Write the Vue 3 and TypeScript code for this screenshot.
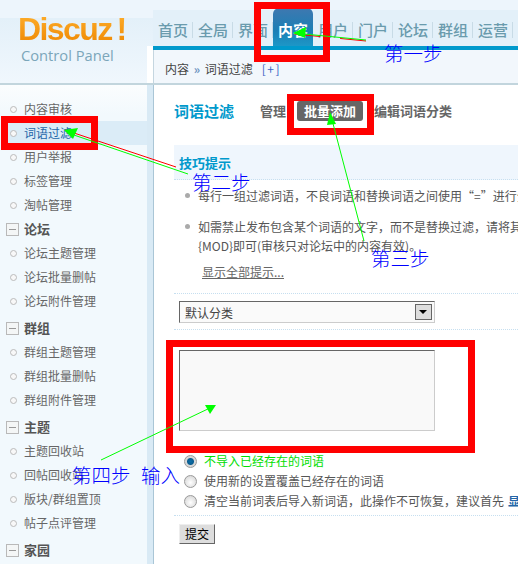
<script setup lang="ts">
const navItems = ['首页', '全局', '界面', '内容', '用户', '门户', '论坛', '群组', '运营']
const groups = [
  { title: '', items: ['内容审核', '词语过滤', '用户举报', '标签管理', '淘帖管理'] },
  { title: '论坛', items: ['论坛主题管理', '论坛批量删帖', '论坛附件管理'] },
  { title: '群组', items: ['群组主题管理', '群组批量删帖', '群组附件管理'] },
  { title: '主题', items: ['主题回收站', '回帖回收站', '版块/群组置顶', '帖子点评管理'] },
  { title: '家园', items: [] as string[] },
]
const radios = [
  { text: '不导入已经存在的词语', on: true },
  { text: '使用新的设置覆盖已经存在的词语', on: false },
  { text: '清空当前词表后导入新词语，此操作不可恢复，建议首先', on: false, link: '显示' },
]
</script>

<template>
  <div class="page">
    <header class="top">
      <div class="brand">
        <div class="logo">Discuz<span class="bang">!</span></div>
        <div class="panel">Control Panel</div>
      </div>
      <div class="gutter"></div>
      <div class="top-right">
        <nav class="nav">
          <a v-for="n in navItems" :key="n" class="nav-item" :class="{ active: n === '内容' }">{{ n }}</a>
        </nav>
        <div class="crumb">内容 <span class="sep">»</span> 词语过滤<span class="plus">[+]</span></div>
      </div>
    </header>

    <div class="body">
      <aside class="side">
        <section v-for="g in groups" :key="g.title" class="group">
          <div v-if="g.title" class="group-title"><span class="minus"></span>{{ g.title }}</div>
          <div v-for="i in g.items" :key="i" class="side-item" :class="{ current: i === '词语过滤' }">
            <span class="dot"></span>{{ i }}
          </div>
        </section>
      </aside>
      <div class="splitter"></div>
      <main class="main">
        <div class="tabs">
          <h3 class="title">词语过滤</h3>
          <span class="tab first">管理</span>
          <span class="tab on">批量添加</span>
          <span class="tab">编辑词语分类</span>
        </div>
        <div class="tip-head">技巧提示</div>
        <ul class="tips">
          <li>每行一组过滤词语，不良词语和替换词语之间使用“=”进行分隔</li>
          <li>如需禁止发布包含某个词语的文字，而不是替换过滤，请将其对应<br />{MOD}即可(审核只对论坛中的内容有效)。</li>
        </ul>
        <a class="more">显示全部提示...</a>
        <div class="row-select">
          <div class="select">默认分类<span class="arrow"></span></div>
        </div>
        <div class="row-area">
          <textarea class="area"></textarea>
        </div>
        <div class="radios">
          <div v-for="r in radios" :key="r.text" class="radio" :class="{ green: r.on }">
            <span class="bullet" :class="{ checked: r.on }"></span>{{ r.text }}
            <a v-if="r.link" class="radio-link">{{ r.link }}</a>
          </div>
        </div>
        <div class="submit-row"><button class="submit" type="button">提交</button></div>
      </main>
    </div>

    <div class="mark mark-nav"></div>
    <div class="mark mark-side"></div>
    <div class="mark mark-tab"></div>
    <div class="mark mark-area"></div>

    <svg class="arrows" width="518" height="564" viewBox="0 0 518 564">
      <g fill="none" stroke-width="1">
        <path d="M366 40 L294 33" stroke="#f00" transform="translate(0 1)" stroke-dasharray="26 20" />
        <path d="M366 40 L294 33" stroke="#0f0" />
        <path d="M176 167 L65 130" stroke="#f00" />
        <path d="M188 174 L68 133" stroke="#0f0" />
        <path d="M364 241 L331 116" stroke="#0f0" />
        <path d="M101 460 L212 407" stroke="#0f0" />
      </g>
      <path d="M293 33 L306 27 L305 38 Z" fill="#0f0" />
      <path d="M64 130 L78 128 L73 139 Z" fill="#0f0" />
      <path d="M330 112 L336 124 L327 125 Z" fill="#0f0" />
      <path d="M216 405 L205 405 L210 414 Z" fill="#0f0" />
    </svg>
    <span class="step s1">第一步</span>
    <span class="step s2">第二步</span>
    <span class="step s3">第三步</span>
    <span class="step s4">第四步</span>
    <span class="step s5">输入</span>
  </div>
</template>

<style>
html, body { margin: 0; overflow: hidden; background: #fff; }
</style>

<style scoped>
.page {
  position: relative;
  width: 518px;
  height: 564px;
  overflow: hidden;
  font: 12px/24px "Noto Sans CJK SC", "Liberation Sans", sans-serif;
  color: #555;
  background: #fff;
}
.top {
  display: flex;
  height: 83px;
  background: linear-gradient(#edf5fc 0, #edf5fc 18px, #e3f0f9 18px, #f0f7fd 83px);
}
.brand { width: 147px; padding: 12px 0 0 18px; box-sizing: border-box; }
.logo {
  font: bold 32px/34px "Liberation Sans", sans-serif;
  letter-spacing: -1.6px;
  color: #fb9a14;
  background: linear-gradient(#ffb02e, #ee8600);
  -webkit-background-clip: text;
  background-clip: text;
  -webkit-text-fill-color: transparent;
  width: max-content;
}
.bang { margin-left: 5px; }
.panel {
  font: 14.7px/18px "Open Sans", "Liberation Sans", sans-serif;
  color: #7ba6ba;
  margin: 0 0 0 3px;
  white-space: nowrap;
}
.gutter { width: 6px; flex: none; background: linear-gradient(transparent 46px, #fff 46px); }
.top-right {
  flex: 1;
  display: flex;
  flex-direction: column;
  background: #fff;
  min-width: 0;
}
.nav {
  display: flex;
  height: 50px;
  box-sizing: border-box;
  border-bottom: 4px solid #0099cc;
  padding-top: 8px;
  background: linear-gradient(#edf5fc 0, #edf5fc 10px, #e3f0f9 10px);
}
.nav-item {
  position: relative;
  width: 40px;
  flex: none;
  text-align: center;
  font-size: 15px;
  font-weight: 500;
  line-height: 44px;
  color: #6a9bad;
}
.nav-item::after {
  content: "";
  position: absolute;
  right: 0;
  top: 14px;
  height: 16px;
  border-right: 1px solid #c8dbe6;
}
.nav-item.active {
  color: #fff;
  font-weight: 700;
  background: linear-gradient(#3f78b0, #1b7fb5 60%, #1d97c7);
  border-radius: 6px 6px 0 0;
}
.nav-item.active::after { display: none; }
.crumb {
  height: 33px;
  line-height: 38px;
  padding-left: 11px;
  border-left: 1px solid #c5d6e0;
  color: #444;
  background: #f2f7fc;
  white-space: nowrap;
}
.sep { color: #6d93c0; font-weight: 700; margin: 0 2px; }
.plus { color: #3a62c4; margin-left: 9px; letter-spacing: 1.5px; }
.body { display: flex; height: 481px; border-top: 2px solid #c2d5dd; }
.side {
  width: 147px;
  flex: none;
  padding-top: 12px;
  box-sizing: border-box;
  background: linear-gradient(#fbfdfe, #f2f9fd 30px);
}
.group:nth-child(n + 3) { margin-top: 3px; }
.group-title {
  display: flex;
  align-items: center;
  height: 24px;
  font-size: 13px;
  font-weight: 700;
  color: #555;
}
.minus {
  position: relative;
  width: 11px;
  height: 11px;
  margin: 0 5px 0 6px;
  border: 1px solid #b9b9b9;
  background: #f4f6f6;
}
.minus::after {
  content: "";
  position: absolute;
  left: 2px;
  right: 2px;
  top: 5px;
  border-top: 1px solid #999;
}
.side-item {
  display: flex;
  align-items: center;
  height: 24px;
  color: #666;
  white-space: nowrap;
}
.dot {
  width: 5px;
  height: 5px;
  margin: 0 7px 0 10px;
  border: 1px solid #bbb;
  border-radius: 50%;
  background: #f8f8f8;
}
.side-item.current {
  color: #2366a8;
  background: linear-gradient(90deg, transparent 8px, #dbecf7 8px);
}
.splitter {
  width: 6px;
  flex: none;
  background: #d9eaf5;
  border-right: 1px solid #aac6d6;
}
.main { flex: 1; min-width: 0; padding: 0 0 0 20px; background: #fff; }
.tabs { display: flex; align-items: center; height: 20px; margin-top: 16px; white-space: nowrap; }
.title { width: 86px; margin: 0; font-size: 15px; line-height: 20px; color: #0099cc; font-weight: 700; }
.tab { font-size: 13px; font-weight: 700; color: #666; line-height: 20px; margin-right: 11px; }
.tab.on { color: #fff; background: #666; border-radius: 3px; padding: 0 7px; }
.tip-head {
  margin-top: 24px;
  height: 35px;
  line-height: 36px;
  padding-left: 5px;
  font-size: 13px;
  font-weight: 700;
  color: #0099cc;
  background: #eff6fd;
  border-bottom: 1px dotted #c6dff0;
  box-sizing: border-box;
}
.tips { margin: 3px 0 0; padding: 0 0 0 24px; list-style: none; }
.tips li { position: relative; line-height: 19px; color: #555; white-space: nowrap; margin-bottom: 9px; padding-top: 3px; }
.tips li::before {
  content: "";
  position: absolute;
  left: -13px;
  top: 10px;
  width: 5px;
  height: 5px;
  border-radius: 50%;
  background: #aaa;
}
.more {
  display: block;
  width: max-content;
  margin: 1px 0 0 28px;
  line-height: 16px;
  color: #666;
  text-decoration: underline;
}
.row-select {
  margin-top: 13px;
  height: 37px;
  box-sizing: border-box;
  padding: 7px 0 0 5px;
  border-top: 1px dotted #c6dff0;
  border-bottom: 1px dotted #c6dff0;
}
.select {
  display: flex;
  justify-content: space-between;
  align-items: center;
  width: 256px;
  height: 22px;
  box-sizing: border-box;
  padding: 0 2px 0 5px;
  border: 1px solid #ccc;
  border-top-color: #666;
  border-left-color: #666;
  line-height: 19px;
  color: #444;
  background: #fafafa;
}
.arrow {
  position: relative;
  width: 17px;
  height: 16px;
  box-sizing: border-box;
  border: 1px solid #666;
  background: #ddd;
}
.arrow::after {
  content: "";
  position: absolute;
  left: 3px;
  top: 5px;
  border: 4px solid transparent;
  border-top-color: #000;
  border-bottom-width: 0;
}
.row-area { padding: 20px 0 0 5px; height: 120px; box-sizing: border-box; }
.area {
  display: block;
  width: 256px;
  height: 81px;
  box-sizing: border-box;
  margin: 0;
  padding: 0;
  resize: none;
  outline: none;
  border: 1px solid #ccc;
  border-top-color: #666;
  border-left-color: #666;
  background: #f9f9f9;
}
.radios { padding: 0 0 6px 10px; border-bottom: 1px dotted #c6dff0; height: 65px; box-sizing: border-box; margin-top: 1px; }
.radio { display: flex; align-items: center; height: 20px; white-space: nowrap; color: #555; }
.radio.green { color: #0d0; }
.bullet {
  width: 11px;
  height: 11px;
  margin-right: 7px;
  flex: none;
  border: 1px solid #9a9a9a;
  border-radius: 50%;
  background: radial-gradient(circle at 50% 60%, #fff, #cfcfcf);
}
.bullet.checked { background: radial-gradient(circle, #0b6ea8 0, #0b5d90 3px, #d8d8d8 4px); }
.radio-link { color: #2366a8; font-weight: 700; margin-left: 4px; }
.submit-row { padding: 8px 0 0 5px; }
.submit {
  display: block;
  width: 36px;
  height: 20px;
  padding: 0;
  font: 12px/18px "Noto Sans CJK SC", sans-serif;
  color: #000;
  background: #ddd;
  border: 1px solid #eee;
  border-right-color: #666;
  border-bottom-color: #666;
}
.mark { position: absolute; border: 7px solid #f00; box-sizing: border-box; pointer-events: none; }
.mark-nav { left: 254px; top: 2px; width: 76px; height: 60px; }
.mark-side { left: 1px; top: 116px; width: 97px; height: 34px; }
.mark-tab { left: 287px; top: 94px; width: 87px; height: 41px; }
.mark-area { left: 166px; top: 340px; width: 309px; height: 113px; }
.arrows { position: absolute; left: 0; top: 0; pointer-events: none; }
.step {
  position: absolute;
  font-size: 19.5px;
  line-height: 20px;
  font-weight: 300;
  color: #00f;
  white-space: nowrap;
}
.s1 { left: 384px; top: 43px; }
.s2 { left: 192px; top: 172px; }
.s3 { left: 371px; top: 248px; }
.s4 { left: 72px; top: 465px; }
.s5 { left: 141px; top: 465px; }
</style>
